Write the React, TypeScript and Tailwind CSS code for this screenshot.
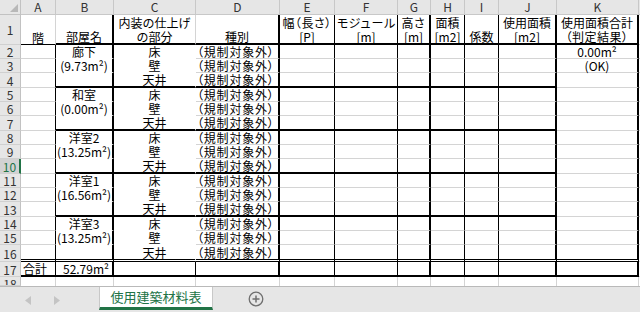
import React from "react";

const COLS = ["A", "B", "C", "D", "E", "F", "G", "H", "I", "J", "K"];
const WIDTH = [
  "w-[35px]",
  "w-[58px]",
  "w-[82px]",
  "w-[84px]",
  "w-[55px]",
  "w-[63px]",
  "w-[33px]",
  "w-[34px]",
  "w-[34px]",
  "w-[58px]",
  "w-[82px]",
];

// right / bottom borders: g = gridline, n = hidden (white fill), t = thin, T = thick, D = double
const RIGHT: Record<string, string> = {
  g: "border-r border-r-[#d4d4d4]",
  n: "border-r border-r-white",
  t: "border-r border-r-black",
  T: "border-r-2 border-r-black",
};
const BOTTOM: Record<string, string> = {
  g: "border-b border-b-[#d4d4d4]",
  n: "border-b border-b-white",
  t: "border-b border-b-black",
  T: "border-b-2 border-b-black",
  D: "border-b-[3px] border-double border-b-black",
  x: "",
};
const HEIGHT: Record<number, string> = {
  9: "h-[9px]",
  14: "h-[14px]",
  15: "h-[15px]",
  17: "h-[17px]",
  30: "h-[30px]",
};

const GROUPS = [
  { name: "廊下", area: "(9.73m²)" },
  { name: "和室", area: "(0.00m²)" },
  { name: "洋室2", area: "(13.25m²)" },
  { name: "洋室1", area: "(16.56m²)" },
  { name: "洋室3", area: "(13.25m²)" },
];
const PARTS = ["床", "壁", "天井"];

const HEAD: [string, string][] = [
  ["", "階"],
  ["", "部屋名"],
  ["内装の仕上げ", "の部分"],
  ["", "種別"],
  ["幅（長さ）", "[P]"],
  ["モジュール", "[m]"],
  ["高さ", "[m]"],
  ["面積", "[m2]"],
  ["", "係数"],
  ["使用面積", "[m2]"],
  ["使用面積合計", "（判定結果）"],
];

function Txt({ s }: { s: string }) {
  // proportional brackets, like the sheet's P-font
  return s.includes("（") ? <span className="[font-feature-settings:'palt'] tracking-[0.5px]">{s}</span> : <span>{s}</span>;
}

function RowLabel({ n, h, active = false }: { n: number; h: number; active?: boolean }) {
  return (
    <div
      className={`${HEIGHT[h]} w-[21px] shrink-0 overflow-hidden border-b border-b-[#d0d0d0] flex justify-center ${
        active
          ? "bg-[#d2d2d2] text-[#217346] border-r-2 border-r-[#217346]"
          : "bg-[#e6e6e6] text-[#333] border-r border-r-[#c2c2c2]"
      } ${h < 14 ? "items-start pt-[1px]" : "items-center pt-[1px]"} leading-[12px]`}
    >
      {n}
    </div>
  );
}

function Cell({
  i,
  r,
  b,
  className = "justify-center items-center pt-[2px]",
  children,
}: {
  i: number;
  r: string;
  b: string;
  className?: string;
  children?: React.ReactNode;
}) {
  return (
    <div
      className={`${WIDTH[i]} ${RIGHT[r]} ${BOTTOM[b]} flex shrink-0 whitespace-nowrap leading-[12px] ${className}`}
    >
      {children}
    </div>
  );
}

function DataRow({
  n,
  h,
  right,
  bottom,
  cells,
  active,
}: {
  n: number;
  h: number;
  right: string;
  bottom: string;
  cells: Record<number, React.ReactNode>;
  active?: boolean;
}) {
  return (
    <div className={`flex ${HEIGHT[h]}`}>
      <RowLabel n={n} h={h} active={active} />
      {COLS.map((_, i) => (
        <Cell
          key={i}
          i={i}
          r={right[i]}
          b={bottom[i]}
          className={
            i === 3
              ? "justify-start items-center pt-[1px] pl-[1px] [font-feature-settings:'palt'] tracking-[0.8px]"
              : "justify-center items-center pt-[1px]"
          }
        >
          {cells[i]}
        </Cell>
      ))}
      <div className="flex-1 border-b border-b-[#d4d4d4]" />
    </div>
  );
}

export default function App() {
  const heights = [14, 14, 15, 14, 14, 15, 14, 14, 15, 14, 14, 15, 14, 14, 17];

  return (
    <div className="w-[640px] h-[312px] overflow-hidden bg-white text-black text-[12px] font-['Noto_Sans_CJK_JP',sans-serif] flex flex-col">
      {/* column headers */}
      <div className="flex h-[15px] shrink-0 bg-[#e6e6e6] text-[#333]">
        <div className="w-[21px] shrink-0 border-r border-b border-[#c2c2c2] flex items-end justify-end p-[2px]">
          <svg width="8" height="8" viewBox="0 0 8 8">
            <polygon points="8,0 8,8 0,8" fill="#b8b8b8" />
          </svg>
        </div>
        {COLS.map((c, i) => (
          <div
            key={c}
            className={`${WIDTH[i]} shrink-0 border-r border-b border-[#c8c8c8] flex items-center justify-center leading-[14px]`}
          >
            {c}
          </div>
        ))}
        <div className="flex-1 border-b border-[#c8c8c8]" />
      </div>

      {/* row 1: table head */}
      <div className="flex h-[30px] shrink-0">
        <RowLabel n={1} h={30} />
        {HEAD.map(([a, b], i) => (
          <Cell
            key={i}
            i={i}
            r={"gTgTttTttTT"[i]}
            b={i === 0 ? "t" : "T"}
            className="flex-col justify-end items-center"
          >
            <div className="flex flex-col items-center leading-[14px] translate-y-[1px]">
              {a && <Txt s={a} />}
              <Txt s={b} />
            </div>
          </Cell>
        ))}
        <div className="flex-1 border-b border-b-[#d4d4d4]" />
      </div>

      {/* rows 2-16 */}
      {heights.map((h, k) => {
        const g = Math.floor(k / 3);
        const p = k % 3;
        const last = k === 14;
        const groupEnd = p === 2 && !last;
        const bottom = last ? "DDDDDDDDDDD" : groupEnd ? "gTTTTTTTTTg" : "gnnggggggggg";
        const cells: Record<number, React.ReactNode> = {
          2: PARTS[p],
          3: "（規制対象外）",
        };
        if (p === 0) cells[1] = GROUPS[g].name;
        if (p === 1) cells[1] = GROUPS[g].area;
        if (k === 0) cells[10] = "0.00m²";
        if (k === 1) cells[10] = "(OK)";
        return (
          <DataRow
            key={k}
            n={k + 2}
            h={h}
            right="tTnTttTttTT"
            bottom={bottom}
            cells={cells}
            active={k + 2 === 10}
          />
        );
      })}

      {/* row 17: total */}
      <div className="flex h-[15px] shrink-0">
        <RowLabel n={17} h={15} />
        {COLS.map((_, i) => (
          <Cell
            key={i}
            i={i}
            r={"tTtTttTttTT"[i]}
            b="T"
            className={
              i === 0
                ? "justify-start items-center pl-[2px]"
                : i === 1
                ? "justify-end items-center pr-[3px]"
                : "justify-center items-center"
            }
          >
            {i === 0 ? "合計" : i === 1 ? "52.79m²" : null}
          </Cell>
        ))}
        <div className="flex-1 border-b border-b-[#d4d4d4]" />
      </div>

      {/* row 18 (cut off by the tab bar) */}
      <div className="flex h-[9px] shrink-0">
        <RowLabel n={18} h={9} />
        {COLS.map((_, i) => (
          <Cell key={i} i={i} r="g" b="x" />
        ))}
        <div className="flex-1" />
      </div>

      {/* sheet tabs */}
      <div className="flex h-[26px] shrink-0 bg-[#e6e6e6] border-t border-t-[#b9b9b9]">
        <div className="w-[99px] shrink-0 flex items-center gap-[23px] pl-[25px] pt-[1px]">
          <svg width="6" height="9" viewBox="0 0 6 9">
            <polygon points="6,0 6,9 0,4.5" fill="#c4c4c4" />
          </svg>
          <svg width="6" height="9" viewBox="0 0 6 9">
            <polygon points="0,0 0,9 6,4.5" fill="#c4c4c4" />
          </svg>
        </div>
        <div className="w-[114px] h-[23px] shrink-0 bg-white border-x border-x-[#c8c8c8] border-b-[3px] border-b-[#217346] flex items-center justify-center text-[13px] leading-[16px] text-[#217346]">
          使用建築材料表
        </div>
        <div className="ml-[35px] flex items-center pb-[1px]">
          <svg width="16" height="16" viewBox="0 0 16 16">
            <circle cx="8" cy="8" r="6.8" fill="none" stroke="#6f6f6f" strokeWidth="1.3" />
            <path d="M8 4.5v7M4.5 8h7" stroke="#6f6f6f" strokeWidth="1.5" />
          </svg>
        </div>
      </div>
    </div>
  );
}
